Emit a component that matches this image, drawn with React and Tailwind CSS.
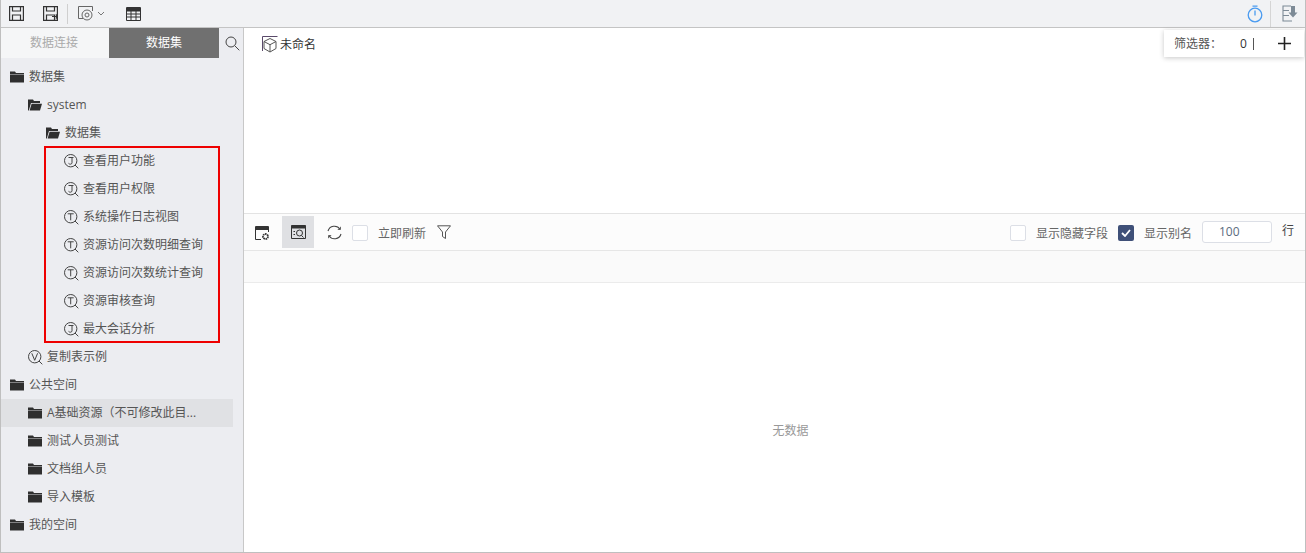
import React from "react";

const font = { fontFamily: '"Open Sans", "Noto Sans CJK SC", sans-serif' };

function SaveIcon({ arrow }) {
  return (
    <svg width="15" height="15" viewBox="0 0 15 15" fill="none" stroke="#333" strokeWidth="1.2">
      <path d="M0.6 0.6h13.800v13.800H0.600z" />
      <path d="M3.500 0.600v4.400h8V0.600M3.500 14.400V9h8v5.400" />
      {arrow && <path d="M9 10.500h5.500M12.800 8.500l2 2-2 2" stroke="#333" />}
    </svg>
  );
}

function Folder({ open }) {
  if (open) {
    return (
      <svg width="14" height="12" viewBox="0 0 14 12">
        <path d="M0 0.500h5l1 1.500h6v2H3L0.800 11.500H0z" fill="#2f2f2f" />
        <path d="M3.600 4.800H14l-2 6.700H1.600z" fill="#2f2f2f" />
      </svg>
    );
  }
  return (
    <svg width="14" height="12" viewBox="0 0 14 12">
      <path d="M0 0.500h5l1 1.500h8v1.400H0z" fill="#2f2f2f" />
      <path d="M0 3.900h14v7.600H0z" fill="#2f2f2f" />
    </svg>
  );
}

function QueryIcon({ letter }) {
  return (
    <svg width="15" height="15" viewBox="0 0 15 15" fill="none" stroke="#444" strokeWidth="1">
      <circle cx="6.700" cy="6.700" r="6.200" />
      <path d="M11 11l3.300 3.300" />
      {letter === "J" && <path d="M4.500 3.500h5M8 3.500v5.300c0 1.700-2.500 1.800-3.500 .5" />}
      {letter === "T" && <path d="M3.700 3.800h6M6.700 3.800v6.500" />}
      {letter === "V" && <path d="M3.800 3.300L6.700 10.300l2.900-7" />}
    </svg>
  );
}

function TreeRow({ indent, icon, label, selected }) {
  return (
    <div className={`h-7 flex items-center text-[12px] text-[#555] ${selected ? "bg-[#e0e1e4]" : ""}`}>
      <div className={`flex items-center w-[15px] mr-[4px] ${indent}`}>{icon}</div>
      <span className="whitespace-nowrap">{label}</span>
    </div>
  );
}

export default function App() {
  const queries = [
    ["J", "查看用户功能"],
    ["J", "查看用户权限"],
    ["T", "系统操作日志视图"],
    ["T", "资源访问次数明细查询"],
    ["T", "资源访问次数统计查询"],
    ["T", "资源审核查询"],
    ["J", "最大会话分析"],
  ];

  return (
    <div style={font} className="w-[1306px] h-[553px] flex flex-col bg-white border-x border-b border-[#bfbfbf] overflow-hidden">
      {/* top toolbar */}
      <div className="h-[28px] shrink-0 flex items-center bg-[#f1f2f4] border-b border-[#c4c4c4] pl-[8px]">
        <SaveIcon />
        <div className="ml-[19px]"><SaveIcon arrow /></div>
        <div className="w-px h-[20px] bg-[#cfcfcf] ml-[9px]" />
        <div className="ml-[10px] flex items-center">
          <svg width="15" height="15" viewBox="0 0 15 15" fill="none" stroke="#666" strokeWidth="1">
            <path d="M5 12.500H0.500v-12h14V5" />
            <circle cx="9" cy="9" r="5" />
            <circle cx="9" cy="9" r="2" />
          </svg>
          <svg className="ml-[4px]" width="8" height="6" viewBox="0 0 8 6" fill="none" stroke="#777" strokeWidth="1">
            <path d="M1 1l3 3 3-3" />
          </svg>
        </div>
        <svg className="ml-[21px]" width="15" height="14" viewBox="0 0 15 14" fill="none" stroke="#333" strokeWidth="1">
          <path d="M0.500 0.500h14v13H0.500z" />
          <path d="M0.500 1.500h14v2.500H0.500z" fill="#333" />
          <path d="M0.500 7h14M0.500 10h14M5 4v9.500M10 4v9.500" />
        </svg>
        <div className="ml-auto flex items-center h-full">
          <svg width="16" height="18" viewBox="0 0 16 18" fill="none" stroke="#4a9bf0" strokeWidth="1.300">
            <circle cx="8" cy="10" r="6.800" />
            <path d="M5.500 1.200h5M8 5.500v5" />
          </svg>
          <div className="w-px h-[26px] bg-[#d5d5d5] ml-[7px]" />
          <svg className="ml-[11px] mr-[7px]" width="16" height="17" viewBox="0 0 16 17" fill="none">
            <path d="M9 1H1v15h9M1 5.500h6M1 10.500h6" stroke="#7d8a96" strokeWidth="1.100" />
            <path d="M9 1h4v6.500H15.500l-4.500 5-4.500-5H9z" fill="#7d8a96" />
          </svg>
        </div>
      </div>

      <div className="flex-1 flex min-h-0">
        {/* sidebar */}
        <div className="w-[243px] shrink-0 bg-[#ecedf1] border-r border-[#c8c8c8]">
          <div className="h-[30px] flex items-center">
            <div className="w-[108px] h-full flex items-center justify-center pr-[2px] bg-[#f5f6f7] text-[12px] text-[#aaa]">数据连接</div>
            <div className="w-[110px] h-full flex items-center justify-center bg-[#707070] text-[12px] text-white">数据集</div>
            <svg className="ml-[6px]" width="15" height="15" viewBox="0 0 15 15" fill="none" stroke="#444" strokeWidth="1">
              <circle cx="6" cy="6" r="5" />
              <path d="M9.700 9.700l4.600 4.600" />
            </svg>
          </div>
          <div className="pt-[5px] w-[232px]">
            <TreeRow indent="ml-[9px]" icon={<Folder />} label="数据集" />
            <TreeRow indent="ml-[27px]" icon={<Folder open />} label="system" />
            <TreeRow indent="ml-[45px]" icon={<Folder open />} label="数据集" />
            <div className="relative">
              {queries.map(([letter, label]) => (
                <TreeRow key={label} indent="ml-[63px]" icon={<QueryIcon letter={letter} />} label={label} />
              ))}
              <div className="absolute left-[43px] -top-px w-[176px] h-[197px] border-2 border-[#ee0000]" />
            </div>
            <TreeRow indent="ml-[27px]" icon={<QueryIcon letter="V" />} label="复制表示例" />
            <TreeRow indent="ml-[9px]" icon={<Folder />} label="公共空间" />
            <TreeRow indent="ml-[27px]" icon={<Folder />} label="A基础资源（不可修改此目..." selected />
            <TreeRow indent="ml-[27px]" icon={<Folder />} label="测试人员测试" />
            <TreeRow indent="ml-[27px]" icon={<Folder />} label="文档组人员" />
            <TreeRow indent="ml-[27px]" icon={<Folder />} label="导入模板" />
            <TreeRow indent="ml-[9px]" icon={<Folder />} label="我的空间" />
          </div>
        </div>

        {/* main */}
        <div className="flex-1 flex flex-col min-w-0">
          <div className="h-[186px] shrink-0 relative border-b border-[#e3e3e3]">
            <div className="flex items-center pt-[8px] pl-[18px] text-[12px] text-[#333]">
              <svg width="16" height="18" viewBox="0 0 16 18" fill="none" stroke="#555" strokeWidth="1">
                <path d="M0.500 15V0.500H15.500" stroke="#5a4a6a" />
                <path d="M8 2.500l6 3v7l-6 3.500-6-3.500v-7z" />
                <path d="M2 5.500l6 3.200 6-3.200M8 8.700V16" />
              </svg>
              <span className="ml-[2px]">未命名</span>
            </div>
            <div className="absolute right-px top-[2px] w-[140px] h-[27px] bg-white shadow-[0_1px_5px_rgba(0,0,0,0.22)] flex items-center pl-[10px] text-[12px] text-[#555]">
              <span>筛选器：</span>
              <span className="ml-[18px] text-[#333]">0</span>
              <span className="ml-[6px] w-px h-[12px] bg-[#555]" />
              <svg className="ml-[24px]" width="13" height="13" viewBox="0 0 13 13" stroke="#222" strokeWidth="1.600">
                <path d="M6.500 0v13M0 6.500h13" />
              </svg>
            </div>
          </div>

          <div className="h-[37px] shrink-0 flex items-center border-b border-[#e6e6e6] bg-[#fcfcfc] pl-[11px] text-[12px] text-[#666]">
            <svg className="mt-[2px]" width="15" height="15" viewBox="0 0 15 15" fill="none" stroke="#333" strokeWidth="1">
              <path d="M6 13.500H0.500v-13h13V6" />
              <path d="M0.500 1.500h13v2H0.500z" fill="#333" />
              <circle cx="10.500" cy="10.500" r="2.500" strokeWidth="1.800" strokeDasharray="1.600 0.600" />
            </svg>
            <div className="ml-[12px] w-[32px] h-[32px] bg-[#dfe0e3] flex items-center justify-center">
              <svg width="15" height="14" viewBox="0 0 15 14" fill="none" stroke="#333" strokeWidth="1">
                <path d="M0.500 0.500h14v13H0.500z" />
                <path d="M0.500 1h14v2H0.500z" fill="#333" />
                <circle cx="8.500" cy="8" r="3" />
                <path d="M10.500 10.500l2 2M2.500 6.500h1.500M2.500 9.500h1.500" />
              </svg>
            </div>
            <svg className="ml-[13px]" width="15" height="15" viewBox="0 0 15 15" fill="none" stroke="#444" strokeWidth="1.100">
              <path d="M1 6A6.700 6.700 0 0 1 13 4.200M14 9A6.700 6.700 0 0 1 2 10.800" />
              <path d="M13.500 1.800V4.500h-2.700M1.500 13.200V10.500h2.700" strokeWidth="0.800" />
            </svg>
            <div className="ml-[10px] mt-[2px] w-[16px] h-[16px] bg-white border border-[#dcdfe6] rounded-[2px]" />
            <span className="ml-[10px] mt-[3px]">立即刷新</span>
            <svg className="ml-[11px]" width="14" height="14" viewBox="0 0 14 14" fill="none" stroke="#555" strokeWidth="1">
              <path d="M0.500 0.800h13L8.500 7v6.500L5.500 11.500V7z" />
            </svg>
            <div className="ml-auto flex items-center">
              <div className="mt-[2px] w-[16px] h-[16px] bg-white border border-[#dcdfe6] rounded-[2px]" />
              <span className="ml-[10px] mt-[3px]">显示隐藏字段</span>
              <div className="ml-[10px] mt-[2px] w-[16px] h-[16px] bg-[#3f5078] rounded-[2px] flex items-center justify-center">
                <svg width="10" height="8" viewBox="0 0 10 8" fill="none" stroke="#fff" strokeWidth="1.800">
                  <path d="M1 4l3 3 5-6" />
                </svg>
              </div>
              <span className="ml-[10px] mt-[3px]">显示别名</span>
              <div className="ml-[10px] w-[70px] h-[22px] bg-white border border-[#dcdfe6] rounded-[3px] flex items-center pl-[16px] text-[#5a6b80]">100</div>
              <span className="ml-[10px] mr-[11px] text-[#444] -mt-[3px]">行</span>
            </div>
          </div>

          <div className="h-[32px] shrink-0 bg-[#fafafa] border-b border-[#ebebeb]" />

          <div className="flex-1 flex items-center justify-center pl-[32px] pt-[26px] text-[12px] text-[#999]">无数据</div>
        </div>
      </div>
    </div>
  );
}
